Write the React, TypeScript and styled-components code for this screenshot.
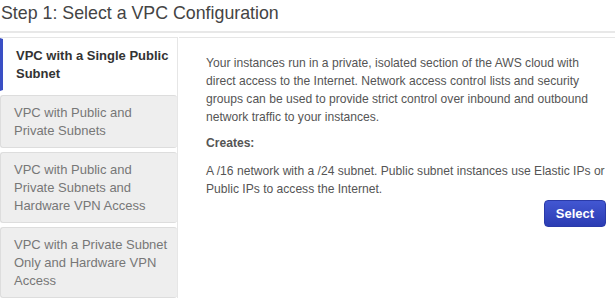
import React from 'react'
import styled, { createGlobalStyle } from 'styled-components'

const GlobalStyle = createGlobalStyle`
    body {
        margin: 0;
        background: #fff;
        font-family: 'Liberation Sans', Arial, sans-serif;
    }
`

const Page = styled.div`
    width: 615px;
    height: 304px;
    overflow: hidden;
`

const Title = styled.h2`
    margin: 0;
    padding: 3px 0 0 1px;
    height: 33px;
    box-sizing: border-box;
    font-size: 17.8px;
    font-weight: 400;
    line-height: 20px;
    color: #444;
    border-bottom: 2px solid #e8e8e8;
`

const Body = styled.div`
    display: flex;
    margin-top: 4px;
`

const Tabs = styled.div`
    width: 178px;
    flex-shrink: 0;
    border-right: 1px solid #e6e6e6;
    border-top: 1px solid #e6e6e6;
    box-sizing: border-box;
    display: flex;
    flex-direction: column;
    gap: 4px;
`

const Tab = styled.div<{ $active?: boolean }>`
    padding: 8px 2px 7px 13px;
    font-size: 13px;
    line-height: 18px;
    font-weight: ${p => (p.$active ? 700 : 400)};
    color: ${p => (p.$active ? '#333' : '#777')};
    background: ${p => (p.$active ? '#fff' : '#eeeeee')};
    border: 1px solid ${p => (p.$active ? '#fff' : '#dddddd')};
    border-left: ${p => (p.$active ? '3px solid #3a4fc4' : '1px solid #dddddd')};
    border-radius: ${p => (p.$active ? '0' : '3px')};
    border-right: none;
`

const Panel = styled.div`
    flex: 1;
    border-top: 1px solid #e6e6e6;
    margin-left: 1px;
    padding: 16px 4px 0 27px;
    font-size: 12.1px;
    line-height: 18px;
    color: #555;
`

const Para = styled.p`
    margin: 0 0 8px;
`

const Heading = styled.p`
    margin: 0 0 10px;
    font-weight: 700;
`

const Actions = styled.div`
    display: flex;
    justify-content: flex-end;
    margin-top: -6px;
    padding-right: 5px;
`

const Button = styled.button`
    width: 62px;
    height: 27px;
    border: 1px solid #2a3aa8;
    border-radius: 4px;
    background: linear-gradient(#4257d2, #2b3cb3);
    color: #fff;
    font-family: 'Liberation Sans', Arial, sans-serif;
    font-size: 13px;
    font-weight: 700;
    padding: 0;
`

const tabs = [
    'VPC with a Single Public Subnet',
    'VPC with Public and Private Subnets',
    'VPC with Public and Private Subnets and Hardware VPN Access',
    'VPC with a Private Subnet Only and Hardware VPN Access',
]

const App: React.FC = () => {
    return (
        <Page>
            <GlobalStyle />
            <Title>Step 1: Select a VPC Configuration</Title>
            <Body>
                <Tabs>
                    {tabs.map((t, i) => (
                        <Tab key={t} $active={i === 0}>{t}</Tab>
                    ))}
                </Tabs>
                <Panel>
                    <Para>
                        Your instances run in a private, isolated section of the AWS cloud with
                        direct access to the Internet. Network access control lists and security
                        groups can be used to provide strict control over inbound and outbound
                        network traffic to your instances.
                    </Para>
                    <Heading>Creates:</Heading>
                    <Para>
                        A /16 network with a /24 subnet. Public subnet instances use Elastic IPs or
                        Public IPs to access the Internet.
                    </Para>
                    <Actions>
                        <Button>Select</Button>
                    </Actions>
                </Panel>
            </Body>
        </Page>
    )
}

export default App
